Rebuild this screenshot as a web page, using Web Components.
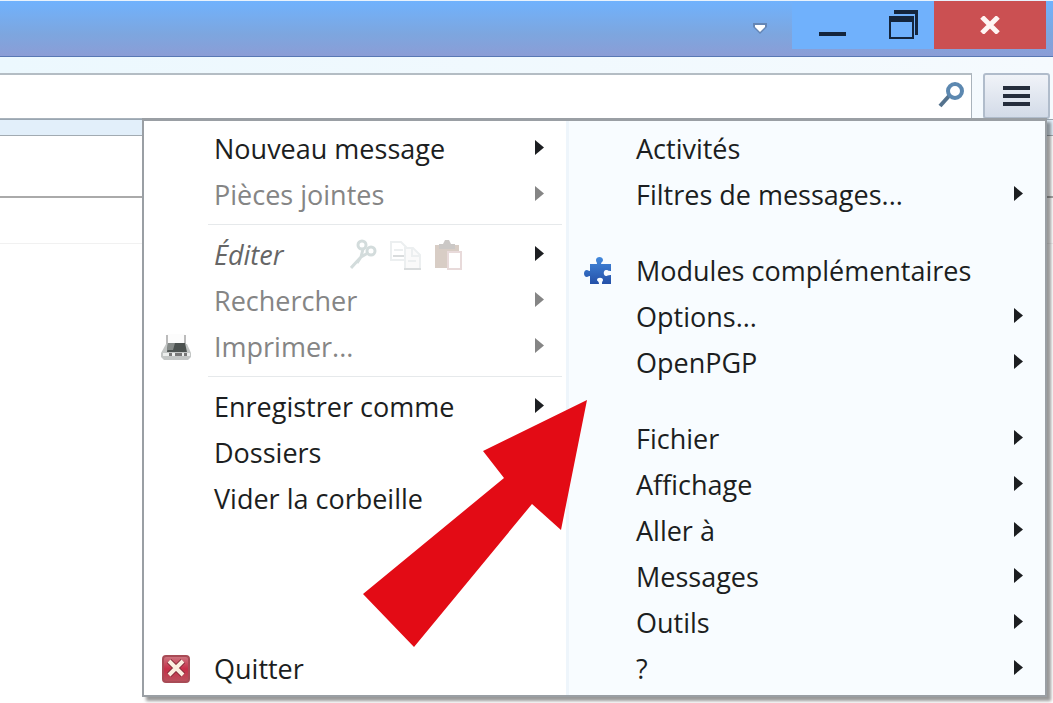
<!DOCTYPE html>
<html lang="fr">
<head>
<meta charset="utf-8">
<meta name="viewport" content="width=device-width, initial-scale=1">
<title>Menu</title>
<style>
  html, body {
    height: 100%;
    margin: 0;
  }

  body {
    font-family: "Open Sans", "Noto Sans", sans-serif;
    background: #fff;
    overflow: hidden;
  }
</style>
</head>
<body>
<mail-window></mail-window>

<script>
const ARROW = /* html */`<svg class="arrow" viewBox="0 0 9 15" width="9" height="15" aria-hidden="true"><path d="M0 0 9 7.500 0 15z" fill="currentColor"/></svg>`;

class TitleBar extends HTMLElement {
  constructor() {
    super();
    this.attachShadow({ mode: "open" });
  }

  static get styles() {
    return /* css */`
      :host {
        display: flex;
        justify-content: flex-end;
        height: 57px;
        padding-right: 7px;
        box-sizing: border-box;
        border-top: 1px solid #e8f2fc;
        border-bottom: 1px solid #5878b4;
        background: linear-gradient(#70b2fd, #7da6df 60%, #8b9dd6);
      }

      button {
        display: flex;
        align-items: center;
        justify-content: center;
        height: 48px;
        box-sizing: border-box;
        padding: 0;
        border: 0;
        background: #70b1fc;
      }

      .more {
        width: 64px;
        background: none;
      }

      .min,
      .max {
        width: 71px;
        justify-content: flex-end;
        padding-right: 16px;
      }

      .close {
        width: 112px;
        background: #cb5052;
      }
    `;
  }

  connectedCallback() {
    this.shadowRoot.innerHTML = /* html */`
    <style>${TitleBar.styles}</style>
    <button class="more" aria-label="Plus">
      <svg width="20" height="20" viewBox="0 0 20 20"><path d="M3 8h14v4l-7 7-7-7z" fill="#6586b5"/><path d="M5 10h10v2l-5 5-5-5z" fill="#fff"/></svg>
    </button>
    <button class="min" aria-label="Réduire">
      <svg width="28" height="28" viewBox="0 0 28 28"><path d="M0 21h27v4H0z" fill="#14253c"/></svg>
    </button>
    <button class="max" aria-label="Restaurer">
      <svg width="29" height="30" viewBox="0 0 29 30"><path d="M5 0h24v25h-3V4H5z" fill="#14253c"/><path fill-rule="evenodd" d="M0 6h25v23H0zM2 12v15h21V12z" fill="#14253c"/></svg>
    </button>
    <button class="close" aria-label="Fermer">
      <svg width="22" height="18" viewBox="0 0 22 18"><path d="M3 1 19 17M19 1 3 17" stroke="#fff5f2" stroke-width="5"/></svg>
    </button>`;
  }
}

class SearchBar extends HTMLElement {
  constructor() {
    super();
    this.attachShadow({ mode: "open" });
  }

  static get styles() {
    return /* css */`
      :host {
        display: flex;
        gap: 11px;
        padding: 16px 3px 0 0;
        background: linear-gradient(90deg, #ecf8fe, #f5fafe);
      }

      .field {
        display: flex;
        align-items: center;
        flex: 1;
        height: 46px;
        box-sizing: border-box;
        padding-right: 7px;
        border: 1px solid #a9b3bc;
        border-top: 2px solid #b4bdc4;
        border-left: 0;
        background: #fff;
      }

      input {
        flex: 1;
        min-width: 0;
        border: 0;
        outline: 0;
        background: none;
        font: inherit;
        font-size: 24px;
      }

      .field svg {
        margin-bottom: 3px;
      }

      button {
        display: flex;
        align-items: center;
        justify-content: center;
        width: 67px;
        height: 46px;
        padding: 0;
        border: 2px solid #b0bccb;
        border-radius: 3px;
        background: linear-gradient(#f0f3f8, #d3dbe8);
      }
    `;
  }

  connectedCallback() {
    this.shadowRoot.innerHTML = /* html */`
    <style>${SearchBar.styles}</style>
    <div class="field">
      <input type="text" aria-label="Rechercher">
      <svg width="26" height="26" viewBox="0 0 26 26" fill="none"><path d="M2 24 11 14" stroke="#54728d" stroke-width="4"/><circle cx="17" cy="9" r="7" stroke="#5c88b0" stroke-width="4"/></svg>
    </div>
    <button aria-label="Menu">
      <svg width="27" height="20" viewBox="0 0 27 20"><path d="M0 0h27v4H0zM0 8h27v4H0zM0 16h27v4H0z" fill="#252d3c"/></svg>
    </button>`;
  }
}

class MenuEntry extends HTMLElement {
  constructor() {
    super();
    this.attachShadow({ mode: "open" });
  }

  static get styles() {
    return /* css */`
      :host {
        display: flex;
        align-items: center;
        height: 46px;
        flex: none;
        padding-right: 22px;
        font-size: 27px;
        line-height: 46px;
        color: #1c1e21;
      }

      :host([off]) {
        color: #858585;
      }

      .icon {
        display: flex;
        justify-content: center;
        width: 62px;
        padding-right: 14px;
        box-sizing: border-box;
      }

      .label {
        display: flex;
        flex: 1;
        align-items: center;
        height: 46px;
        padding: 0;
        border: 0;
        background: none;
        font: inherit;
        color: inherit;
        white-space: nowrap;
        text-align: left;
      }

      :host([italic]) .label {
        flex: none;
        width: 136px;
        font-style: italic;
        color: #666;
      }

      .tools {
        display: flex;
        flex: 1;
        gap: 12px;
      }

      :host(:not([italic])) .tools {
        display: none;
      }

      .arrow {
        flex: none;
        margin-bottom: 4px;
      }

      :host(:not([sub])) .arrow {
        display: none;
      }
    `;
  }

  connectedCallback() {
    this.shadowRoot.innerHTML = /* html */`
    <style>${MenuEntry.styles}</style>
    <span class="icon"><slot name="icon"></slot></span>
    <button class="label"><slot></slot></button>
    <span class="tools"><slot name="tools"></slot></span>
    ${ARROW}`;
  }
}

class AppMenu extends HTMLElement {
  constructor() {
    super();
    this.attachShadow({ mode: "open" });
  }

  static get styles() {
    return /* css */`
      :host {
        display: grid;
        grid-template-columns: 422fr 479fr;
        box-sizing: border-box;
        border: 2px solid #9a9fa4;
        border-top-width: 3px;
        background: #fff;
        box-shadow: 4px 4px 3px #0006;
      }

      .column {
        display: flex;
        flex-direction: column;
        padding: 5px 0 3px;
      }

      .left {
        padding-left: 8px;
      }

      .right {
        padding-left: 5px;
        border-left: 3px solid #eef5fb;
        background: #f8fcff;
      }

      hr {
        width: auto;
        height: 1px;
        margin: 6px 4px 7px 56px;
        border: 0;
        background: #e6e9eb;
      }

      .gap {
        height: 30px;
      }

      .last {
        margin-top: auto;
      }

      .tool {
        display: flex;
        padding: 0;
        border: 0;
        background: none;
      }

      .pointer {
        position: absolute;
        left: 219px;
        top: 279px;
        pointer-events: none;
      }
    `;
  }

  connectedCallback() {
    this.shadowRoot.innerHTML = /* html */`
    <style>${AppMenu.styles}</style>
    <div class="column left">
      <menu-entry sub>Nouveau message</menu-entry>
      <menu-entry sub off>Pièces jointes</menu-entry>
      <hr>
      <menu-entry sub italic>Éditer
        <button slot="tools" class="tool" aria-label="Couper">
          <svg width="28" height="32" viewBox="0 0 28 32" fill="none" stroke="#d3dcdc" stroke-width="3"><circle cx="12" cy="6" r="4"/><circle cx="21" cy="12" r="4"/><path d="M13 10 11 18 1 29M18 14 11 18 7 24"/></svg>
        </button>
        <button slot="tools" class="tool" aria-label="Copier">
          <svg width="32" height="32" viewBox="0 0 32 32" fill="none" stroke="#eceff0" stroke-width="2"><path d="M14 21H1V3h10l5 5v3M4 11h9"/><path d="M3 17h11" stroke="#d9dcdd"/><path d="M15 9h8l7 7v14H15z" fill="#fafafa"/><path d="M22 10v7h7M18 22h8"/><path d="M14 30h17" stroke="#d9dcdd"/></svg>
        </button>
        <button slot="tools" class="tool" aria-label="Coller">
          <svg width="30" height="32" viewBox="0 0 30 32"><path d="M1 6h24v23H1z" fill="#d8cdc5"/><path d="M5 5h4l2-4h4l2 4h4v5H5z" fill="#cbc8c6"/><path d="M14 13h13v17H14z" fill="#fff" stroke="#e8dada" stroke-width="2"/></svg>
        </button>
      </menu-entry>
      <menu-entry sub off>Rechercher</menu-entry>
      <menu-entry sub off>Imprimer...
        <svg slot="icon" width="32" height="30" viewBox="0 0 32 30"><path d="M7 2h18v12H7z" fill="#fcfcfc"/><path d="M7 3v9M25 3v9" stroke="#bbb" stroke-width="2"/><path d="M6 12h21l4 9v4l-3 3H4l-3-3v-4z" fill="#c3c6c5"/><path d="M8 11h17l2 9H7z" fill="#4c5250"/><path d="M8 11h7l-2 7H7z" fill="#858a88"/><path d="M3 21h27v3H3z" fill="#eceeed"/><path d="M9 21h3v3H9zM15 21h7v3h-7zM24 21h3v3h-3z" fill="#777"/></svg>
      </menu-entry>
      <hr>
      <menu-entry sub>Enregistrer comme</menu-entry>
      <menu-entry>Dossiers</menu-entry>
      <menu-entry>Vider la corbeille</menu-entry>
      <menu-entry class="last">Quitter
        <svg slot="icon" width="28" height="28" viewBox="0 0 28 28"><defs><linearGradient id="quit" x2="0" y2="1"><stop stop-color="#ce7883"/><stop offset=".5" stop-color="#c62f48"/><stop offset="1" stop-color="#b9535e"/></linearGradient></defs><rect x="1" y="1" width="26" height="26" rx="3" fill="url(#quit)" stroke="#a84b56" stroke-width="2"/><path d="M7 6 21 20M21 6 7 20" stroke="#7f2a36" stroke-width="6"/><path d="M7 6 21 20M21 6 7 20" stroke="#fbeee0" stroke-width="4"/></svg>
      </menu-entry>
    </div>
    <div class="column right">
      <menu-entry>Activités</menu-entry>
      <menu-entry sub>Filtres de messages...</menu-entry>
      <div class="gap"></div>
      <menu-entry>Modules complémentaires
        <svg slot="icon" width="28" height="28" viewBox="0 0 28 28"><defs><linearGradient id="piece" x2="0" y2="1"><stop stop-color="#4389dc"/><stop offset="1" stop-color="#2450a8"/></linearGradient></defs><path d="M6 7h7c0-2-1-2-1-4 0-4 7-4 7 0 0 2-2 2-2 4h10v7c-3 0-3-1-5-1-3 0-3 6 0 6 2 0 2-1 5-1v9h-9c0-3 1-3 1-4 0-3-6-3-6 0 0 1 2 1 2 4H6v-8c-2 0-2 1-3 1-4 0-4-7 0-7 1 0 1 1 3 1z" fill="url(#piece)"/></svg>
      </menu-entry>
      <menu-entry sub>Options...</menu-entry>
      <menu-entry sub>OpenPGP</menu-entry>
      <div class="gap"></div>
      <menu-entry sub>Fichier</menu-entry>
      <menu-entry sub>Affichage</menu-entry>
      <menu-entry sub>Aller à</menu-entry>
      <menu-entry sub>Messages</menu-entry>
      <menu-entry sub>Outils</menu-entry>
      <menu-entry sub>?</menu-entry>
    </div>
    <svg class="pointer" width="225" height="248" viewBox="0 0 225 248" aria-hidden="true"><path d="M224 0 120 51 141 78 0 194 51 247 169 104 198 130z" fill="#e30b15"/></svg>`;
  }
}

class MailWindow extends HTMLElement {
  constructor() {
    super();
    this.attachShadow({ mode: "open" });
  }

  static get styles() {
    return /* css */`
      :host {
        display: flex;
        flex-direction: column;
        min-height: 100%;
      }

      .content {
        position: relative;
        flex: 1;
      }

      .strip {
        height: 15px;
        border-top: 1px solid #9aa6b1;
        border-bottom: 1px solid #a2abb2;
        background: #e2effa;
      }

      .header {
        height: 60px;
        border-bottom: 2px solid #aaa;
      }

      .line {
        height: 45px;
        border-bottom: 1px solid #f1f1f1;
      }

      /* the menu hangs from the toolbar button, over the message pane */
      app-menu {
        position: absolute;
        top: -1px;
        left: 142px;
        right: 6px;
      }
    `;
  }

  connectedCallback() {
    this.shadowRoot.innerHTML = /* html */`
    <style>${MailWindow.styles}</style>
    <title-bar></title-bar>
    <search-bar></search-bar>
    <div class="content">
      <div class="strip"></div>
      <div class="header"></div>
      <div class="line"></div>
      <app-menu></app-menu>
    </div>`;
  }
}

customElements.define("title-bar", TitleBar);
customElements.define("search-bar", SearchBar);
customElements.define("menu-entry", MenuEntry);
customElements.define("app-menu", AppMenu);
customElements.define("mail-window", MailWindow);
</script>
</body>
</html>
